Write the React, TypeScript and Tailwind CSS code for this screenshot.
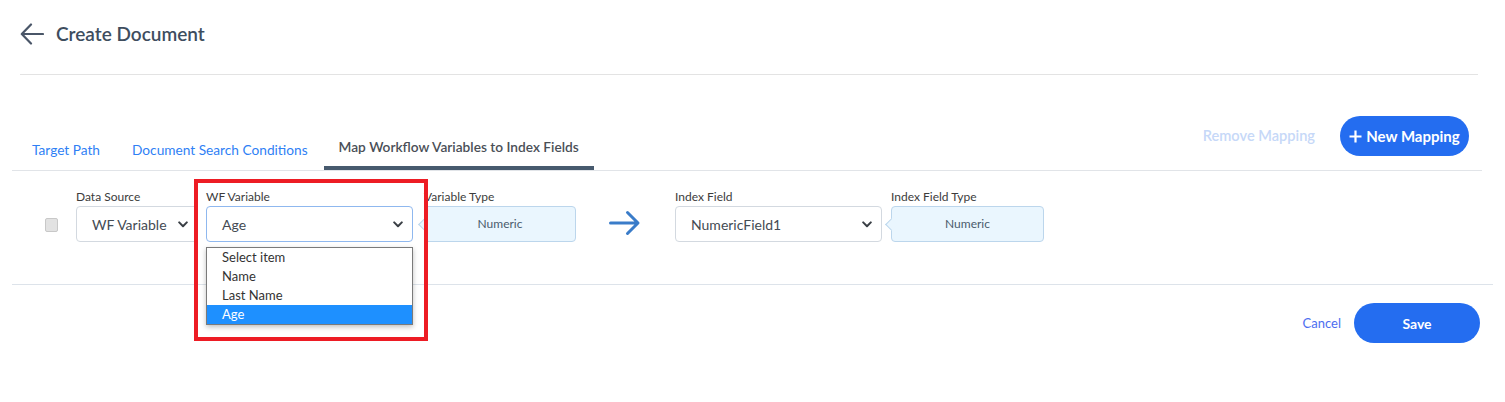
import React from "react";

const font = { fontFamily: '"Lato", "Liberation Sans", sans-serif' };

function Chevron() {
  return (
    <svg width="10" height="7" viewBox="0 0 10 7" className="shrink-0">
      <path d="M1.2 1.4 5 5.2 8.8 1.4" fill="none" stroke="#3a3f45" strokeWidth="2" strokeLinecap="round" strokeLinejoin="round" />
    </svg>
  );
}

function Field({
  label,
  children,
  width,
}: {
  label: string;
  children: React.ReactNode;
  width: string;
}) {
  return (
    <div className={`flex flex-col ${width}`}>
      <span className="mb-px text-[12px] leading-4 text-[#3c3c3c]">{label}</span>
      {children}
    </div>
  );
}

function SelectBox({ value, focused }: { value: string; focused?: boolean }) {
  return (
    <div
      className={`flex h-[36px] items-center justify-between rounded-[4px] border bg-white pl-[15px] pr-[9px] text-[14px] text-[#444b53] ${
        focused ? "border-[#8fb8ef]" : "border-[#d3d9e0]"
      }`}
    >
      <span>{value}</span>
      <Chevron />
    </div>
  );
}

function TypeBox({ value }: { value: string }) {
  return (
    <div className="relative flex h-[36px] items-center justify-center rounded-[4px] border border-[#bcd6ec] bg-[#eaf6fe] text-[12px] text-[#4b5c6d]">
      <span className="absolute -left-[5px] top-[13px] h-[9px] w-[9px] rotate-45 border-b border-l border-[#bcd6ec] bg-[#eaf6fe]" />
      {value}
    </div>
  );
}

export default function App() {
  return (
    <div className="relative h-[402px] w-full overflow-hidden bg-white" style={font}>
      {/* header */}
      <div className="mt-[14px] flex h-[40px] items-center gap-3 pl-5">
        <svg width="24" height="22" viewBox="0 0 24 22">
          <path d="M23 11H2M11 1.5 1.8 11l9.2 9.5" fill="none" stroke="#4a5668" strokeWidth="2.2" strokeLinecap="round" strokeLinejoin="round" />
        </svg>
        <h1 className="text-[19px] font-semibold text-[#3e4d5e]">Create Document</h1>
      </div>
      <div className="ml-5 mt-[20px] w-[1458px] border-t border-[#e3e3e3]" />

      {/* tabs */}
      <div className="mx-3 mt-[41px] flex w-[1470px] items-end justify-between border-b border-[#e1e4e8]">
        <div className="flex items-end pl-1">
          <div className="px-4 pb-[10px] text-[13.7px] leading-5 text-[#2f7ff5]">Target Path</div>
          <div className="px-4 pb-[10px] text-[13.7px] leading-5 text-[#2f7ff5]">Document Search Conditions</div>
          <div className="border-b-4 border-[#475a6e] px-[15px] pb-[9px] text-[13.7px] font-semibold leading-5 text-[#4a4f57]">
            Map Workflow Variables to Index Fields
          </div>
        </div>
        <div className="mb-[14px] flex items-center gap-[25px] pr-[13px]">
          <span className="text-[14.6px] font-semibold text-[#c6d8f8]">Remove Mapping</span>
          <button className="flex h-[40px] w-[129px] items-center justify-center gap-[4px] rounded-full bg-[#246df0] text-[15px] font-bold text-white">
            <svg width="13" height="13" viewBox="0 0 13 13">
              <path d="M6.5 0.5v12M0.5 6.5h12" stroke="#fff" strokeWidth="2.2" />
            </svg>
            New Mapping
          </button>
        </div>
      </div>

      {/* mapping row */}
      <div className="flex items-end pl-[45px] pt-[18px]">
        <div className="mb-[10px] mr-[18px] h-[14px] w-[13px] rounded-[2px] border border-[#c8c8c8] bg-[#e2e2e2]" />
        <Field label="Data Source" width="w-[122px]">
          <SelectBox value="WF Variable" />
        </Field>
        <div className="w-2" />
        <Field label="WF Variable" width="w-[207px]">
          <SelectBox value="Age" focused />
        </Field>
        <div className="w-[11px]" />
        <Field label="Variable Type" width="w-[152px]">
          <TypeBox value="Numeric" />
        </Field>
        <div className="mb-[6px] flex w-[99px] justify-center pl-[1px] pr-[3px]">
          <svg width="32" height="26" viewBox="0 0 32 26">
            <path d="M1.5 13h27M18.5 2.5 29 13 18.5 23.5" fill="none" stroke="#3a7cc9" strokeWidth="3" strokeLinecap="round" strokeLinejoin="round" />
          </svg>
        </div>
        <Field label="Index Field" width="w-[207px]">
          <SelectBox value="NumericField1" />
        </Field>
        <div className="w-[9px]" />
        <Field label="Index Field Type" width="w-[153px]">
          <TypeBox value="Numeric" />
        </Field>
      </div>

      <div className="ml-3 mt-[42px] w-[1481px] border-t border-[#dde3ea]" />

      {/* footer */}
      <div className="flex items-center justify-end gap-[13px] pr-[25px] pt-[18px]">
        <span className="mt-[2px] text-[13px] text-[#4d6ef0]">Cancel</span>
        <button className="h-[40px] w-[126px] rounded-full bg-[#246df0] text-[14px] font-bold text-white">Save</button>
      </div>

      {/* open dropdown list */}
      <div className="absolute left-[206px] top-[247px] h-[78px] w-[207px] border border-[#7a7a7a] bg-white text-[13px] leading-[19px] text-[#333] shadow-[0_2px_5px_rgba(0,0,0,0.25)]">
        <div className="pl-[15px]">Select item</div>
        <div className="pl-[15px]">Name</div>
        <div className="pl-[15px]">Last Name</div>
        <div className="bg-[#1e90ff] pl-[15px] text-white">Age</div>
      </div>

      {/* annotation highlight */}
      <div className="absolute left-[194px] top-[179px] h-[162px] w-[234px] border-4 border-[#ed1c24]" />
    </div>
  );
}
